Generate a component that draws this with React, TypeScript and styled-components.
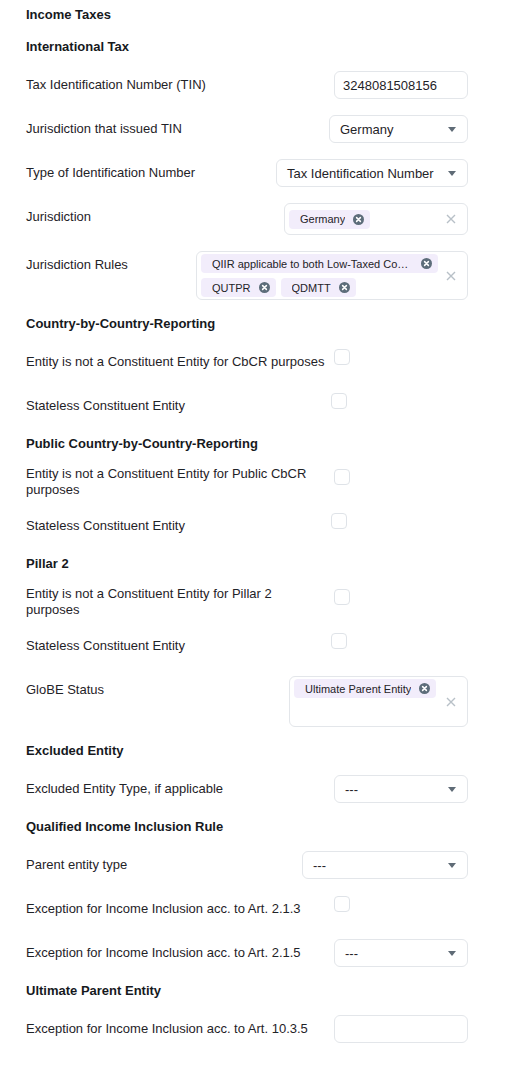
import styled, { createGlobalStyle } from "styled-components";

const GlobalStyle = createGlobalStyle`
  html, body {
    margin: 0;
    padding: 0;
    background: #ffffff;
  }
  body {
    font-family: "Liberation Sans", Arial, sans-serif;
    color: #1f2328;
  }
`;

const Page = styled.div`
  display: flex;
  flex-direction: column;
  gap: 16px;
  padding: 7px 57px 24px 26px;
`;

const Heading = styled.h3`
  margin: 0;
  font-size: 13px;
  line-height: 16px;
  font-weight: 700;
  color: #16191d;
`;

const Row = styled.div`
  display: flex;
  justify-content: space-between;
  align-items: flex-start;
`;

const Label = styled.div`
  max-width: 300px;
  height: 28px;
  display: flex;
  align-items: center;
  font-size: 13px;
  line-height: 16.5px;
  color: #1f2328;
`;

const Field = styled.div<{ $width: number }>`
  box-sizing: border-box;
  width: ${({ $width }) => $width}px;
  height: 28px;
  border: 1px solid #e3e6ea;
  border-radius: 6px;
  background: #fff;
  font-size: 13px;
  color: #1f2328;
  display: flex;
  align-items: center;
`;

const TextInput = styled(Field)`
  padding: 0 8px;
`;

const SelectBox = styled(Field)`
  padding: 0 11px 0 10px;
  justify-content: space-between;
`;

const Caret = () => (
  <svg width="8" height="5" viewBox="0 0 8 5">
    <polygon points="0,0 8,0 4,5" fill="#5f6b76" />
  </svg>
);

const MultiBox = styled.div<{ $width: number; $min?: number }>`
  box-sizing: border-box;
  width: ${({ $width }) => $width}px;
  min-height: ${({ $min }) => $min ?? 28}px;
  border: 1px solid #e3e6ea;
  border-radius: 6px;
  background: #fff;
  padding: 2px 4px;
  display: flex;
  align-items: center;
`;

const ChipArea = styled.div<{ $top?: boolean }>`
  flex: 1;
  min-width: 0;
  display: flex;
  flex-wrap: wrap;
  gap: 5px;
  align-self: ${({ $top }) => ($top ? "flex-start" : "center")};
`;

const Chip = styled.span`
  box-sizing: border-box;
  max-width: 100%;
  height: 19px;
  display: inline-flex;
  align-items: center;
  gap: 8px;
  padding: 0 6px 0 11px;
  border-radius: 4px;
  background: #f2edfb;
  font-size: 11px;
  color: #1f2328;
`;

const ChipText = styled.span`
  min-width: 0;
  white-space: nowrap;
  overflow: hidden;
  text-overflow: ellipsis;
`;

const TypeAhead = styled.span<{ $ownLine?: boolean }>`
  flex: ${({ $ownLine }) => ($ownLine ? "1 0 100%" : "1")};
  min-width: 30px;
  height: 19px;
`;

const Clear = styled.span`
  width: 25px;
  flex-shrink: 0;
  display: flex;
  justify-content: center;
  align-items: center;
`;

const ChipRemove = () => (
  <svg width="11" height="11" viewBox="0 0 11 11" style={{ flexShrink: 0 }}>
    <circle cx="5.5" cy="5.5" r="5.5" fill="#5d6d7a" />
    <path d="M3.6 3.6 L7.4 7.4 M7.4 3.6 L3.6 7.4" stroke="#fff" strokeWidth="1.5" strokeLinecap="round" />
  </svg>
);

const ClearIcon = () => (
  <svg width="10" height="10" viewBox="0 0 10 10">
    <path d="M1 1 L9 9 M9 1 L1 9" stroke="#b8c0c7" strokeWidth="1.4" />
  </svg>
);

const CheckCell = styled.div`
  width: 137px;
  height: 28px;
`;

const CheckBox = styled.span<{ $shift: number }>`
  box-sizing: border-box;
  display: block;
  width: 16px;
  height: 16px;
  margin: 1px 0 0 ${({ $shift }) => $shift}px;
  border: 1px solid #dfe3e8;
  border-radius: 4px;
  background: #fff;
`;

type Item =
  | { kind: "heading"; text: string }
  | { kind: "input"; label: string; value: string; width: number }
  | { kind: "select"; label: string; value: string; width: number }
  | { kind: "multi"; label: string; chips: string[]; width: number; min?: number; wrapInput?: boolean }
  | { kind: "check"; label: string; shift: number };

const items: Item[] = [
  { kind: "heading", text: "Income Taxes" },
  { kind: "heading", text: "International Tax" },
  { kind: "input", label: "Tax Identification Number (TIN)", value: "3248081508156", width: 134 },
  { kind: "select", label: "Jurisdiction that issued TIN", value: "Germany", width: 139 },
  { kind: "select", label: "Type of Identification Number", value: "Tax Identification Number", width: 192 },
  { kind: "multi", label: "Jurisdiction", chips: ["Germany"], width: 184, min: 32 },
  {
    kind: "multi",
    label: "Jurisdiction Rules",
    chips: ["QIIR applicable to both Low-Taxed Constituent Entities", "QUTPR", "QDMTT"],
    width: 272,
  },
  { kind: "heading", text: "Country-by-Country-Reporting" },
  { kind: "check", label: "Entity is not a Constituent Entity for CbCR purposes", shift: 3 },
  { kind: "check", label: "Stateless Constituent Entity", shift: 0 },
  { kind: "heading", text: "Public Country-by-Country-Reporting" },
  { kind: "check", label: "Entity is not a Constituent Entity for Public CbCR purposes", shift: 3 },
  { kind: "check", label: "Stateless Constituent Entity", shift: 0 },
  { kind: "heading", text: "Pillar 2" },
  { kind: "check", label: "Entity is not a Constituent Entity for Pillar 2 purposes", shift: 3 },
  { kind: "check", label: "Stateless Constituent Entity", shift: 0 },
  { kind: "multi", label: "GloBE Status", chips: ["Ultimate Parent Entity"], width: 179, min: 51, wrapInput: true },
  { kind: "heading", text: "Excluded Entity" },
  { kind: "select", label: "Excluded Entity Type, if applicable", value: "---", width: 134 },
  { kind: "heading", text: "Qualified Income Inclusion Rule" },
  { kind: "select", label: "Parent entity type", value: "---", width: 166 },
  { kind: "check", label: "Exception for Income Inclusion acc. to Art. 2.1.3", shift: 3 },
  { kind: "select", label: "Exception for Income Inclusion acc. to Art. 2.1.5", value: "---", width: 134 },
  { kind: "heading", text: "Ultimate Parent Entity" },
  { kind: "input", label: "Exception for Income Inclusion acc. to Art. 10.3.5", value: "", width: 134 },
];

function Control({ item }: { item: Exclude<Item, { kind: "heading" }> }) {
  switch (item.kind) {
    case "input":
      return <TextInput $width={item.width}>{item.value}</TextInput>;
    case "select":
      return (
        <SelectBox $width={item.width}>
          <span>{item.value}</span>
          <Caret />
        </SelectBox>
      );
    case "multi":
      return (
        <MultiBox $width={item.width} $min={item.min}>
          <ChipArea $top={item.wrapInput}>
            {item.chips.map((c) => (
              <Chip key={c}>
                <ChipText>{c}</ChipText>
                <ChipRemove />
              </Chip>
            ))}
            <TypeAhead $ownLine={item.wrapInput} />
          </ChipArea>
          <Clear>
            <ClearIcon />
          </Clear>
        </MultiBox>
      );
    case "check":
      return (
        <CheckCell>
          <CheckBox $shift={item.shift} />
        </CheckCell>
      );
  }
}

export default function App() {
  return (
    <>
      <GlobalStyle />
      <Page>
        {items.map((item, i) =>
          item.kind === "heading" ? (
            <Heading key={i}>{item.text}</Heading>
          ) : (
            <Row key={i}>
              <Label>{item.label}</Label>
              <Control item={item} />
            </Row>
          )
        )}
      </Page>
    </>
  );
}
